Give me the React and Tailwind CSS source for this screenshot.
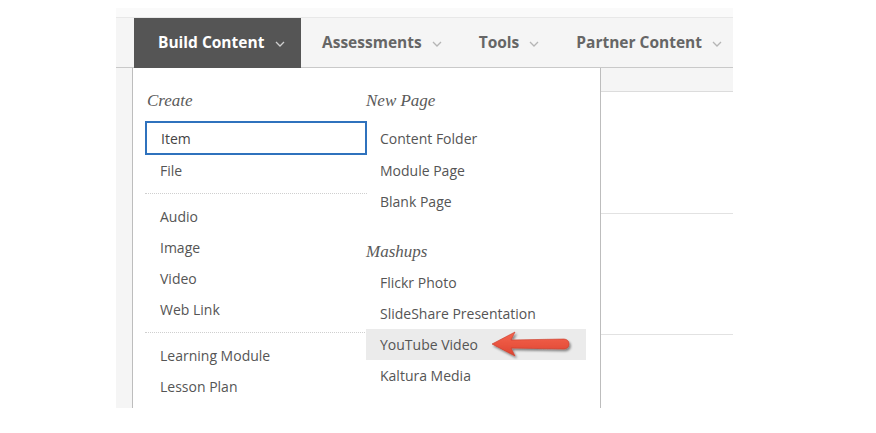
import React from 'react';

const sans = { fontFamily: '"Open Sans", "Liberation Sans", sans-serif' };
const serif = { fontFamily: '"Liberation Serif", "DejaVu Serif", serif' };

function Chevron({ color }) {
  return (
    <svg width="10" height="6" viewBox="0 0 10 6" className="mt-[2px]">
      <path d="M1 1 L5 5 L9 1" fill="none" stroke={color} strokeWidth="1.3" />
    </svg>
  );
}

function Arrow() {
  return (
    <svg width="84" height="30" viewBox="0 0 84 30" className="ml-[11px]">
      <defs>
        <linearGradient id="arrowFill" x1="0" y1="0" x2="0" y2="1">
          <stop offset="0" stopColor="#f5654f" />
          <stop offset="1" stopColor="#de4431" />
        </linearGradient>
        <filter id="arrowShadow" x="-10%" y="-30%" width="130%" height="170%">
          <feDropShadow dx="1.5" dy="2" stdDeviation="1.2" floodColor="#000" floodOpacity="0.45" />
        </filter>
      </defs>
      <path
        d="M3 14 L26 2 L22 10 L75 9 Q80 9.5 80 14 Q80 18.5 75 19 L22 18 L26 26 Z"
        fill="url(#arrowFill)"
        stroke="#c93a28"
        strokeWidth="0.6"
        strokeLinejoin="round"
        filter="url(#arrowShadow)"
      />
    </svg>
  );
}

const navItems = ['Assessments', 'Tools', 'Partner Content'];

function Row({ children, className = '' }) {
  return (
    <div className={`h-[31px] flex items-center pl-[14px] text-[14px] text-[#555] ${className}`}>
      {children}
    </div>
  );
}

function Heading({ children, className = '' }) {
  return (
    <div className={`h-[30px] flex items-center italic text-[17px] text-[#5a5a5a] ${className}`} style={serif}>
      {children}
    </div>
  );
}

export default function App() {
  return (
    <div className="w-[876px] h-[433px] bg-white overflow-hidden" style={sans}>
      <div className="ml-[116px] mt-[8px] w-[617px] h-[400px] bg-[#fafafa] flex flex-col">
        {/* top nav */}
        <div className="mt-[9px] h-[51px] border-t border-b border-t-[#e8e8e8] border-b-[#c9c9c9] bg-[#f5f5f5] flex">
          <div className="ml-[18px] w-[167px] bg-[#555] flex items-center pl-[24px] gap-[11px] -mb-px">
            <span className="text-white font-bold text-[15.5px]">Build Content</span>
            <Chevron color="#cfcfcf" />
          </div>
          <div className="flex items-center pl-[21px] gap-[37px]">
            {navItems.map((n) => (
              <div key={n} className="flex items-center gap-[10px]">
                <span className="text-[#666] font-bold text-[15.5px]">{n}</span>
                <Chevron color="#b5b5b5" />
              </div>
            ))}
          </div>
        </div>

        <div className="flex flex-1">
          <div className="w-[16px] bg-[#f5f5f5]" />

          {/* dropdown panel */}
          <div className="w-[469px] bg-white border-x border-[#bdbdbd] pl-[12px] pt-[18px] flex">
            <div className="w-[222px]">
              <Heading className="pl-[2px]">Create</Heading>
              <div className="mt-[5px] h-[34px] border-2 border-[#2f72bd] flex items-center pl-[14px] text-[14px] text-[#444]">
                Item
              </div>
              <Row className="pl-[15px]">File</Row>
              <div className="my-[7px] border-t border-dotted border-[#cfcfcf]" />
              <Row className="pl-[15px]">Audio</Row>
              <Row className="pl-[15px]">Image</Row>
              <Row className="pl-[15px]">Video</Row>
              <Row className="pl-[15px]">Web Link</Row>
              <div className="my-[7px] border-t border-dotted border-[#cfcfcf]" />
              <Row className="pl-[15px]">Learning Module</Row>
              <Row className="pl-[15px]">Lesson Plan</Row>
            </div>
            <div className="w-[220px] -ml-px">
              <Heading>New Page</Heading>
              <div className="mt-[5px] h-[34px] flex items-center pl-[14px] text-[14px] text-[#555]">Content Folder</div>
              <Row>Module Page</Row>
              <Row>Blank Page</Row>
              <Heading className="mt-[20px]">Mashups</Heading>
              <Row>Flickr Photo</Row>
              <Row>SlideShare Presentation</Row>
              <Row className="bg-[#ebebeb] text-[#444]">
                <span>YouTube Video</span>
                <Arrow />
              </Row>
              <Row>Kaltura Media</Row>
            </div>
          </div>

          {/* content to the right */}
          <div className="w-[132px] bg-white flex flex-col">
            <div className="h-[24px] bg-[#f5f5f5] border-b border-[#dcdcdc]" />
            <div className="h-[122px] border-b border-[#e2e2e2]" />
            <div className="h-[121px] border-b border-[#e2e2e2]" />
          </div>
        </div>
      </div>
    </div>
  );
}
